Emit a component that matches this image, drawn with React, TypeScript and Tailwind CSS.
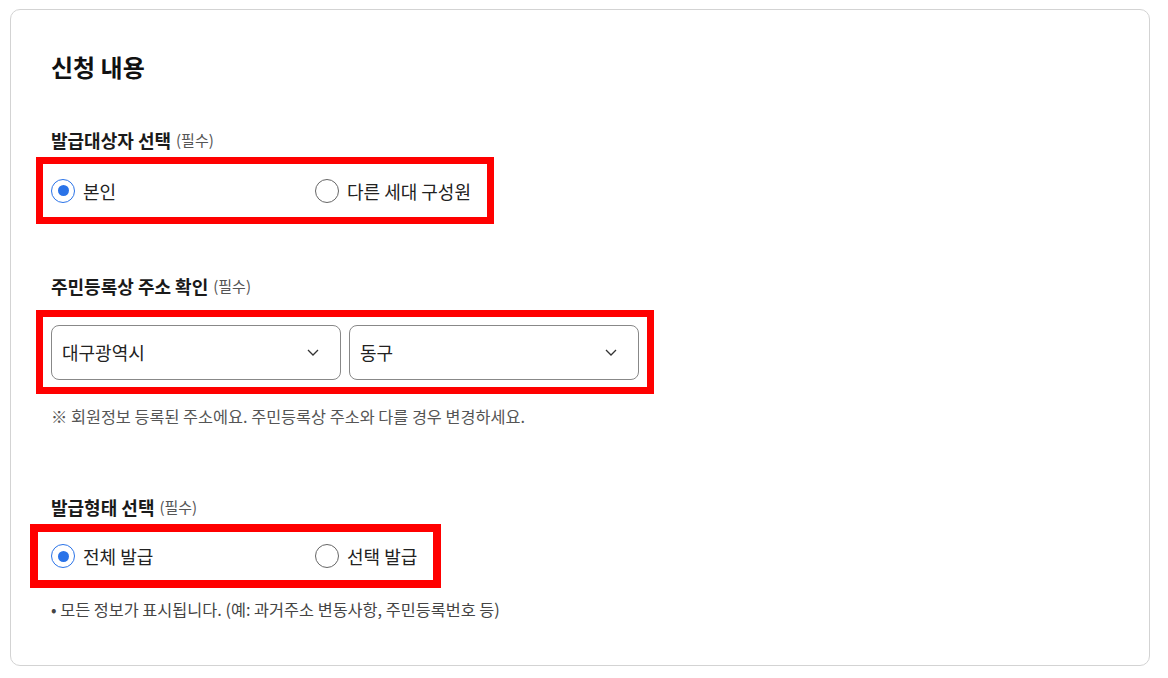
import { useState } from "react";

const Radio = ({ checked, label, onClick }: { checked: boolean; label: string; onClick: () => void }) => (
  <button type="button" onClick={onClick} className="flex items-center gap-[8px] text-left">
    <span
      className={`flex h-[24px] w-[24px] items-center justify-center rounded-full border ${
        checked ? "border-[#2a73e8]" : "border-[#666]"
      }`}
    >
      {checked && <span className="h-[11px] w-[11px] rounded-full bg-[#2a73e8]" />}
    </span>
    <span className="text-[18px] leading-[24px] text-[#222]">{label}</span>
  </button>
);

const Select = ({ value }: { value: string }) => (
  <div className="flex h-[55px] w-[290px] items-center justify-between rounded-[8px] border border-[#888] pl-[10px] pr-[21px]">
    <span className="text-[18px] text-[#222]">{value}</span>
    <svg width="12" height="7" viewBox="0 0 12 7" fill="none">
      <polyline points="1,1 6,6 11,1" stroke="#333" strokeWidth="1.3" />
    </svg>
  </div>
);

const Label = ({ text }: { text: string }) => (
  <div className="flex h-[24px] items-center gap-[5px] text-[#1a1a1a]">
    <span className="text-[18px] font-bold leading-[24px]">{text}</span>
    <span className="text-[15px] leading-[24px] text-[#555]">(필수)</span>
  </div>
);

export default function App() {
  const [target, setTarget] = useState("self");
  const [kind, setKind] = useState("all");

  return (
    <div
      className="bg-white pl-[10px] pt-[9px]"
      style={{ fontFamily: '"Noto Sans CJK KR", "Noto Sans", sans-serif' }}
    >
      <div className="h-[657px] w-[1140px] rounded-[10px] border border-[#d3d3d3] pl-[40px] pt-[41px]">
        <h2 className="text-[24px] font-bold leading-[32px] text-[#111]">신청 내용</h2>

        <div className="mt-[45px]">
          <Label text="발급대상자 선택" />
          <div className="mt-[5px] -ml-[15px] flex h-[67px] w-[458px] items-center border-[7px] border-[#ff0000] pl-[8px]">
            <div className="w-[264px]">
              <Radio checked={target === "self"} label="본인" onClick={() => setTarget("self")} />
            </div>
            <Radio checked={target === "other"} label="다른 세대 구성원" onClick={() => setTarget("other")} />
          </div>
        </div>

        <div className="mt-[50px]">
          <Label text="주민등록상 주소 확인" />
          <div className="mt-[12px] -ml-[15px] flex h-[84px] w-[618px] items-center gap-[8px] border-[7px] border-[#ff0000] pl-[8px]">
            <Select value="대구광역시" />
            <Select value="동구" />
          </div>
          <p className="mt-[10px] text-[16.3px] leading-[24px] text-[#555]">
            ※ 회원정보 등록된 주소에요. 주민등록상 주소와 다를 경우 변경하세요.
          </p>
        </div>

        <div className="mt-[67px]">
          <Label text="발급형태 선택" />
          <div className="mt-[5px] -ml-[21px] flex h-[64px] w-[411px] items-center border-[8px] border-[#ff0000] pl-[13px]">
            <div className="w-[264px]">
              <Radio checked={kind === "all"} label="전체 발급" onClick={() => setKind("all")} />
            </div>
            <Radio checked={kind === "part"} label="선택 발급" onClick={() => setKind("part")} />
          </div>
          <p className="mt-[9px] text-[16.3px] leading-[24px] text-[#444]">
            • 모든 정보가 표시됩니다. (예: 과거주소 변동사항, 주민등록번호 등)
          </p>
        </div>
      </div>
    </div>
  );
}
